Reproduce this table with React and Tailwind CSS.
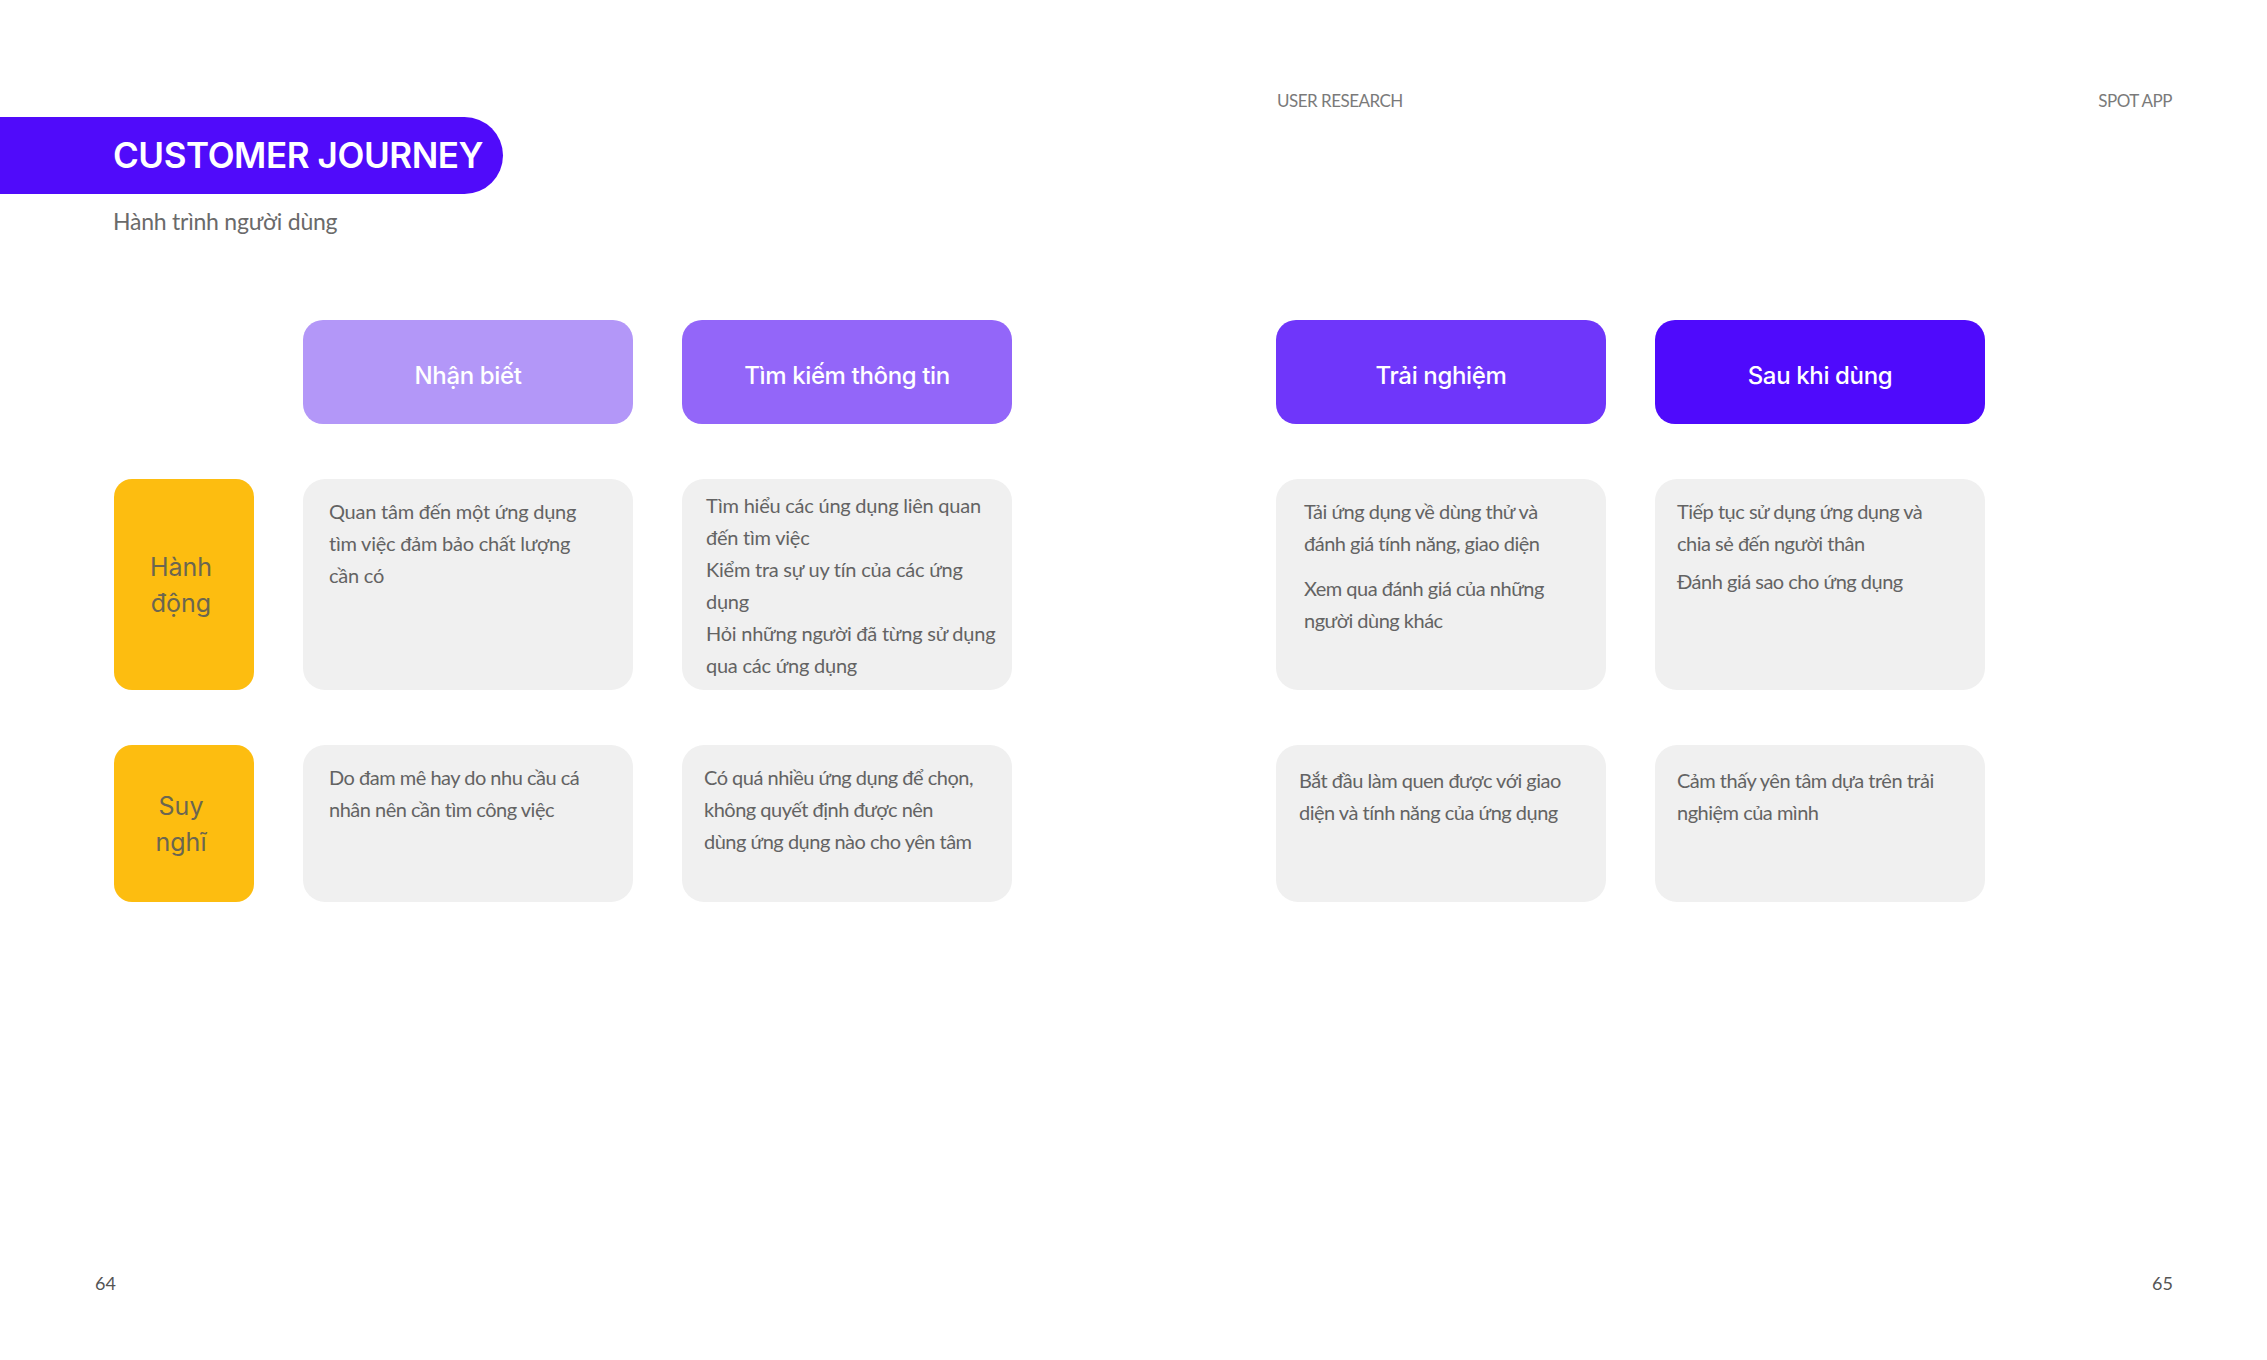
const phases = [
  { label: "Nhận biết", color: "bg-[#b397f8]" },
  { label: "Tìm kiếm thông tin", color: "bg-[#9366f9]" },
  null,
  { label: "Trải nghiệm", color: "bg-[#6f36fa]" },
  { label: "Sau khi dùng", color: "bg-[#4f0afc]" },
];

const rows = [
  {
    label: ["Hành", "động"],
    height: "h-[211px]",
    cards: [
      { pad: "pl-[26px] pt-[16px]", font: "normal", paras: [["Quan tâm đến một ứng dụng", "tìm việc đảm bảo chất lượng", "cần có"]] },
      { pad: "pl-[24px] pt-[10px]", font: "normal", paras: [["Tìm hiểu các úng dụng liên quan", "đến tìm việc"], ["Kiểm tra sự uy tín của các ứng", "dụng"], ["Hỏi những người đã từng sử dụng", "qua các ứng dụng"]], gap: "gap-0" },
      null,
      { pad: "pl-[28px] pt-[16px]", font: "narrow", paras: [["Tải ứng dụng về dùng thử và", "đánh giá tính năng, giao diện"], ["Xem qua đánh giá của những", "người dùng khác"]], gap: "gap-[13px]" },
      { pad: "pl-[22px] pt-[16px]", font: "narrow", paras: [["Tiếp tục sử dụng ứng dụng và", "chia sẻ đến người thân"], ["Đánh giá sao cho ứng dụng"]], gap: "gap-[6px]" },
    ],
  },
  {
    label: ["Suy", "nghĩ"],
    height: "h-[157px]",
    cards: [
      { pad: "pl-[26px] pt-[16px]", font: "narrow", paras: [["Do đam mê hay do nhu cầu cá", "nhân nên cần tìm công việc"]] },
      { pad: "pl-[22px] pt-[16px]", font: "narrow", paras: [["Có quá nhiều ứng dụng để chọn,", "không quyết định được nên", "dùng ứng dụng nào cho yên tâm"]] },
      null,
      { pad: "pl-[23px] pt-[19px]", font: "narrow", paras: [["Bắt đầu làm quen được với giao", "diện và tính năng của ứng dụng"]] },
      { pad: "pl-[22px] pt-[19px]", font: "narrow", paras: [["Cảm thấy yên tâm dựa trên trải", "nghiệm của mình"]] },
    ],
  },
];

const bodyFont = "font-['Lato','Noto_Sans',sans-serif]";
const headFont = "font-['Inter','Noto_Sans',sans-serif]";

function Card({ card, height }) {
  return (
    <div className={`${height} rounded-[22px] bg-[#f0f0f0] ${card.pad}`}>
      <div
        className={`flex flex-col ${card.gap || "gap-0"} ${bodyFont} text-[20px] leading-[32px] text-[#636363] ${
          card.font === "narrow" ? "tracking-[-0.025em]" : "tracking-[-0.012em]"
        }`}
      >
        {card.paras.map((p, i) => (
          <div key={i}>
            {p.map((line, j) => (
              <div key={j} className="whitespace-nowrap">
                {line}
              </div>
            ))}
          </div>
        ))}
      </div>
    </div>
  );
}

export default function App() {
  return (
    <div className="w-[2267px] h-[1360px] bg-white flex flex-col overflow-hidden">
      {/* top labels */}
      <div className={`flex justify-between pt-[92px] pl-[1277px] pr-[95px] ${bodyFont} text-[17px] leading-[18px] tracking-[-0.03em] text-[#7a7a7a]`}>
        <span>USER RESEARCH</span>
        <span>SPOT APP</span>
      </div>

      {/* title */}
      <div className="mt-[7px] h-[77px] w-[503px] rounded-r-full bg-[#500bfa] flex items-center pl-[113px]">
        <h1 className={`${headFont} text-[35px] font-semibold tracking-[-0.012em] text-white`}>
          CUSTOMER JOURNEY
        </h1>
      </div>
      <p className={`mt-[12px] pl-[113px] ${bodyFont} text-[23px] leading-[30px] tracking-[-0.01em] text-[#6a6a6a]`}>
        Hành trình người dùng
      </p>

      {/* journey grid */}
      <div className="mt-[84px] ml-[114px] grid grid-cols-[140px_330px_330px_166px_330px_330px] gap-x-[49px] gap-y-[55px]">
        <div />
        {phases.map((p, i) =>
          p ? (
            <div
              key={i}
              className={`h-[104px] rounded-[20px] ${p.color} flex items-center justify-center pt-[8px] ${headFont} text-[24px] font-medium tracking-[-0.015em] text-white`}
            >
              {p.label}
            </div>
          ) : (
            <div key={i} />
          )
        )}

        {rows.map((row, r) => (
          <div key={r} className="contents">
            <div className={`${row.height} rounded-[18px] bg-[#fdbd10] flex flex-col items-center justify-center pr-[6px] ${headFont} text-[25px] leading-[36px] text-[#6b6650]`}>
              {row.label.map((l) => (
                <span key={l}>{l}</span>
              ))}
            </div>
            {row.cards.map((c, i) =>
              c ? <Card key={i} card={c} height={row.height} /> : <div key={i} />
            )}
          </div>
        ))}
      </div>

      {/* page numbers */}
      <div className={`mt-auto flex justify-between pl-[95px] pr-[94px] pb-[66px] ${bodyFont} text-[18px] leading-[22px] text-[#555]`}>
        <span>64</span>
        <span>65</span>
      </div>
    </div>
  );
}
